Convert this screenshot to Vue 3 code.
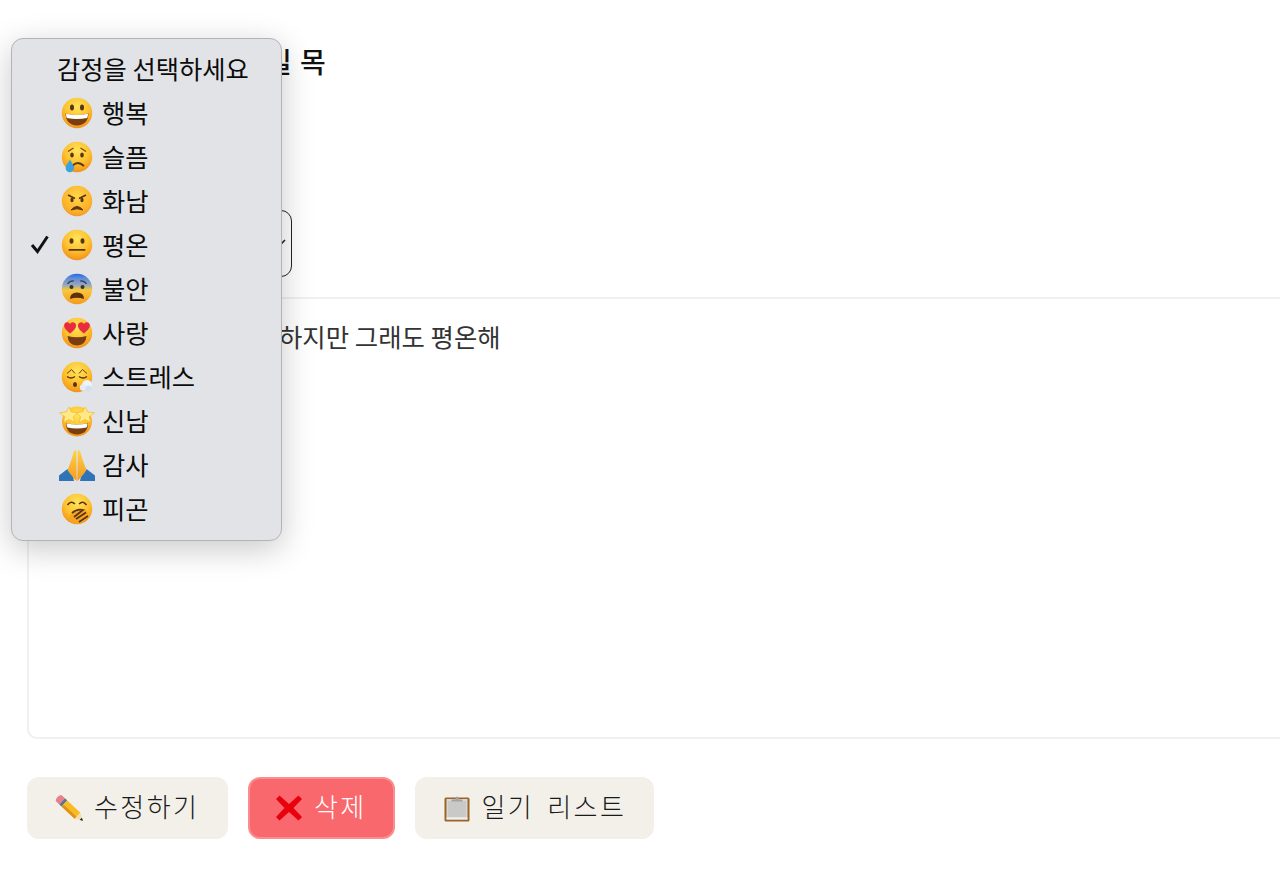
<script setup>
const rows = [
  { key: 'grin', label: '행복' },
  { key: 'cry', label: '슬픔' },
  { key: 'angry', label: '화남' },
  { key: 'neutral', label: '평온', checked: true },
  { key: 'fear', label: '불안' },
  { key: 'love', label: '사랑' },
  { key: 'exhale', label: '스트레스' },
  { key: 'star', label: '신남' },
  { key: 'pray', label: '감사' },
  { key: 'yawn', label: '피곤' }
]
</script>

<template>
  <div class="page">
    <svg class="defs" width="0" height="0" aria-hidden="true">
      <defs>
        <radialGradient id="face" cx="50%" cy="30%" r="72%">
          <stop offset="0" stop-color="#ffe45c" />
          <stop offset="0.55" stop-color="#fdc22f" />
          <stop offset="0.9" stop-color="#f59a1c" />
          <stop offset="1" stop-color="#ea8f2c" />
        </radialGradient>
        <radialGradient id="faceAngry" cx="50%" cy="35%" r="72%">
          <stop offset="0" stop-color="#ffd84a" />
          <stop offset="0.7" stop-color="#fbb028" />
          <stop offset="1" stop-color="#ec9028" />
        </radialGradient>
        <linearGradient id="faceFear" x1="0" y1="0" x2="0" y2="1">
          <stop offset="0" stop-color="#2468e4" />
          <stop offset="0.14" stop-color="#5f8ad8" />
          <stop offset="0.36" stop-color="#93a6bf" />
          <stop offset="0.54" stop-color="#f9c83a" />
          <stop offset="1" stop-color="#f59a1c" />
        </linearGradient>
        <linearGradient id="hand" x1="0" y1="0" x2="0" y2="1">
          <stop offset="0" stop-color="#ffd24a" />
          <stop offset="1" stop-color="#f29a1e" />
        </linearGradient>
      </defs>
    </svg>

    <h1 class="title">일 목</h1>

    <div class="select-box">
      <svg class="chevron" width="12" height="12" viewBox="0 0 12 12">
        <path d="M2 4l4 4 4-4" fill="none" stroke="#222" stroke-width="1.6" />
      </svg>
    </div>

    <div class="body-box">하지만 그래도 평온해</div>

    <div class="actions">
      <button class="btn btn-edit">
        <svg width="28" height="28" viewBox="0 0 28 28">
          <g transform="translate(3.5 4) rotate(43)">
            <path d="M0 -4.200h5v8.400h-5q-3 -4.200 0 -8.400z" fill="#e8808c" />
            <rect x="5" y="-4.200" width="3" height="8.400" fill="#5b7390" />
            <rect x="8" y="-4.200" width="18" height="8.400" fill="#f8bb22" />
            <rect x="8" y="1.400" width="18" height="2.800" fill="#e0911a" />
            <path d="M26 -4.200L33 0 26 4.200z" fill="#f5dcae" />
            <path d="M30.500 -1.500L33.500 0 30.500 1.500z" fill="#161616" />
          </g>
        </svg>
        <span class="btn-text">수정하기</span>
      </button>
      <button class="btn btn-delete">
        <svg width="28" height="28" viewBox="0 0 28 28">
          <path d="M1 5l3.500-3.500 9.500 8.500 9.500-8.500L27 5l-8.500 9L27 23l-3.500 3.500-9.500-8.500-9.500 8.500L1 23l8.500-9z" fill="#e9000f" />
        </svg>
        <span class="btn-text">삭제</span>
      </button>
      <button class="btn btn-list">
        <svg width="28" height="28" viewBox="0 0 28 28">
          <rect x="1.500" y="3.500" width="25" height="24" rx="1.500" fill="#9b6426" />
          <rect x="3.500" y="5" width="21" height="20.500" fill="#d8d8d6" />
          <rect x="5" y="7" width="18" height="16" fill="#c9c9c7" />
          <rect x="3.500" y="23.500" width="21" height="2" fill="#efefed" />
          <path d="M8.500 5.500h3.800c.3-1.600.9-3 1.700-3s1.400 1.400 1.700 3h3.800v2h-11z" fill="#a3a3a3" />
        </svg>
        <span class="btn-text">일기 리스트</span>
      </button>
    </div>

    <div class="menu">
      <div class="menu-row menu-head">감정을 선택하세요</div>
      <div v-for="row in rows" :key="row.key" class="menu-row">
        <span class="check">
          <svg v-if="row.checked" width="20" height="20" viewBox="0 0 20 20">
            <path d="M2 11l5.500 6.500L17.500 2.500" fill="none" stroke="#111" stroke-width="3" />
          </svg>
        </span>
        <span class="emoji">
          <svg width="36" height="32" viewBox="-2 0 36 32">
            <template v-if="row.key === 'grin'">
              <circle cx="16" cy="16" r="15.200" fill="url(#face)" />
              <ellipse cx="11" cy="10.500" rx="2" ry="3" fill="#5b3410" />
              <ellipse cx="21" cy="10.500" rx="2" ry="3" fill="#5b3410" />
              <path d="M4.500 16.500Q16 19.500 27.500 16.500Q27 28 16 28.500Q5 28 4.500 16.500z" fill="#7a3d12" />
              <path d="M5 16.700Q16 19.500 27 16.700Q27 19.500 26.200 21Q16 23 5.800 21Q5 19.500 5 16.700z" fill="#fff" />
            </template>
            <template v-else-if="row.key === 'cry'">
              <circle cx="16" cy="16" r="15.200" fill="url(#face)" />
              <path d="M7 10.500L12.500 7M25 10.500L19.500 7" stroke="#7a4510" stroke-width="1.300" fill="none" />
              <ellipse cx="11" cy="14" rx="1.800" ry="2.500" fill="#5b3410" />
              <ellipse cx="21" cy="14" rx="1.800" ry="2.500" fill="#5b3410" />
              <path d="M11 25.500Q16 19 23 25" stroke="#5b3410" stroke-width="2" fill="none" />
              <path d="M9 18.500C10.800 22 13 24 13 27a4.200 4.200 0 0 1-8.400 0C4.600 24 7 22 9 18.500z" fill="#3aa3dc" />
            </template>
            <template v-else-if="row.key === 'angry'">
              <circle cx="16" cy="16" r="15.200" fill="url(#faceAngry)" />
              <path d="M7 10L14 13.500M25 10L18 13.500" stroke="#5b3410" stroke-width="1.700" fill="none" />
              <ellipse cx="11" cy="15" rx="1.600" ry="2.200" fill="#5b3410" />
              <ellipse cx="21" cy="15" rx="1.600" ry="2.200" fill="#5b3410" />
              <path d="M10 25Q16 18 22 25Q16 22.500 10 25z" fill="#5b3410" stroke="#5b3410" stroke-width="1" />
            </template>
            <template v-else-if="row.key === 'neutral'">
              <circle cx="16" cy="16" r="15.200" fill="url(#face)" />
              <ellipse cx="10.500" cy="12" rx="2" ry="2.800" fill="#5b3410" />
              <ellipse cx="21.500" cy="12" rx="2" ry="2.800" fill="#5b3410" />
              <rect x="7.500" y="20" width="17" height="1.800" rx=".9" fill="#5b3410" />
            </template>
            <template v-else-if="row.key === 'fear'">
              <circle cx="16" cy="16" r="15.200" fill="url(#faceFear)" />
              <path d="M6.500 11Q9 7.500 13 8M25.500 11Q23 7.500 19 8" stroke="#33415c" stroke-width="1.200" fill="none" />
              <circle cx="10.500" cy="14" r="2" fill="#3a2f2a" />
              <circle cx="21.500" cy="14" r="2" fill="#3a2f2a" />
              <path d="M9 26Q9 19.500 16 19.500Q23 19.500 23 26Q16 23.500 9 26z" fill="#5b2f10" />
            </template>
            <template v-else-if="row.key === 'love'">
              <circle cx="16" cy="16" r="15.200" fill="url(#face)" />
              <path d="M9 16.500C5 13 2.500 10.500 3.300 7.500 4 5 7.500 4.300 9 7 10.500 4.300 14.500 5 15 8 15.500 11 12.500 14 9 16.500z" fill="#e82c3f" />
              <path d="M23 16.500C19.500 14 16.500 11 17 8 17.500 5 21.500 4.300 23 7 24.500 4.300 28 5 28.700 7.500 29.500 10.500 27 13 23 16.500z" fill="#e82c3f" />
              <path d="M6.500 19Q16 21.500 25.500 19Q25 28 16 28.500Q7 28 6.500 19z" fill="#7a3d12" />
            </template>
            <template v-else-if="row.key === 'exhale'">
              <circle cx="16" cy="16" r="15.200" fill="url(#face)" />
              <path d="M6 12.500L10.500 8.500L14 12.500M26 12.500L21.500 8.500L18 12.500" stroke="#6b3d10" stroke-width="1" fill="none" />
              <path d="M6 15.500Q10 18.500 14 15.500M18 15.500Q22 18.500 26 15.500" stroke="#5b3410" stroke-width="1.300" fill="none" />
              <ellipse cx="14" cy="23.500" rx="2" ry="2.500" fill="#5b3410" />
              <circle cx="26" cy="24" r="5" fill="#eef3f8" />
              <circle cx="22" cy="26.500" r="3.200" fill="#e4ecf5" />
              <circle cx="27.500" cy="27.500" r="3" fill="#cfe0f2" />
            </template>
            <template v-else-if="row.key === 'star'">
              <circle cx="16" cy="16.500" r="15" fill="url(#face)" />
              <path d="M8 2l2.500 5 6.500.7-4.500 4 1.300 5.800L8 14.500l-5.500 3 1.300-5.800L-1.500 7.700l6.700-.7z" fill="#ffe985" stroke="#f5b220" stroke-width=".6" />
              <path d="M24 2l2.800 5 6.700.7-5.300 4 1.300 5.800-5.500-3-5.800 3 1.300-5.800-4.500-4 6.500-.7z" fill="#ffe985" stroke="#f5b220" stroke-width=".6" />
              <path d="M5 18Q16 21 27 18Q27 29 16 29.500Q5 29 5 18z" fill="#7a3d12" />
              <path d="M5.500 18.200Q16 21 26.500 18.200Q26.500 21 25.500 22.500Q16 24.500 6.500 22.500Q5.500 21 5.500 18.200z" fill="#fff" />
            </template>
            <template v-else-if="row.key === 'pray'">
              <path d="M-2 32V26.500L6.500 20 12 27.500 13 32zM34 32V26.500L25.500 20 20 27.500 19 32z" fill="#2f73b8" />
              <path d="M15.700 32L13 29.500 9 24.500 6.500 21Q10.500 12 12.500 3.500Q13.500 .5 15.300 1.500zM16.300 32L19 29.500 23 24.500 25.500 21Q21.500 12 19.500 3.500Q18.500 .5 16.700 1.500z" fill="url(#hand)" />
            </template>
            <template v-else>
              <circle cx="16" cy="16" r="15.200" fill="url(#face)" />
              <path d="M6.500 12Q10 7 14 11M18 11Q22 7 25.500 12" stroke="#5b3410" stroke-width="1.600" fill="none" />
              <path d="M11 20Q16 15 22 16Q27 17 27 22Q25 30 17 31Q9 30 8 25Q8 22 11 20z" fill="#f6a523" />
              <path d="M11 20Q16 15.500 22 17L13 24M15 26L25 19.500M18 29L27 23" stroke="#5b3410" stroke-width="1.800" fill="none" />
            </template>
          </svg>
        </span>
        <span class="label">{{ row.label }}</span>
      </div>
    </div>
  </div>
</template>

<style scoped>
.page {
  position: relative;
  width: 1280px;
  height: 874px;
  overflow: hidden;
  background: #fff;
  box-sizing: border-box;
  padding: 41px 0 0 27px;
  font-family: "Noto Sans CJK KR", "Noto Sans", sans-serif;
  color: #111;
}
.defs {
  position: absolute;
}
.title {
  margin: 0 0 129px;
  padding-left: 239px;
  height: 40px;
  line-height: 40px;
  font-size: 28px;
  font-weight: 500;
  word-spacing: 2px;
}
.select-box {
  box-sizing: border-box;
  width: 265px;
  height: 67px;
  border: 1.5px solid #222;
  border-radius: 11px;
  display: flex;
  align-items: center;
  justify-content: flex-end;
  padding-right: 4px;
}
.chevron {
  display: block;
  margin-top: -3px;
}
.body-box {
  box-sizing: border-box;
  width: 1300px;
  height: 442px;
  margin-top: 20px;
  padding: 19px 0 0 250px;
  border: 2px solid #f0f0f0;
  border-radius: 10px;
  font-size: 25.4px;
  line-height: 36px;
  color: #333;
}
.actions {
  display: flex;
  gap: 20px;
  margin-top: 38px;
}
.btn {
  box-sizing: border-box;
  height: 62px;
  display: flex;
  align-items: center;
  gap: 11px;
  border: 0;
  border-radius: 12px;
  background: #f3f0ea;
  color: #1a1a1a;
  font-family: "Noto Sans CJK KR", sans-serif;
  font-size: 26px;
  font-weight: 300;
  letter-spacing: 2.4px;
  word-spacing: 5px;
}
.btn-text {
  margin-bottom: 5px;
}
.btn-edit {
  width: 201px;
  padding: 0 0 0 28px;
}
.btn-delete {
  width: 147px;
  padding: 0 0 0 25px;
  gap: 11px;
  background: #f9686c;
  border: 2px solid #fb8d90;
  color: #fff;
}
.btn-list {
  width: 239px;
  padding: 0 0 0 27.5px;
}
.menu {
  position: absolute;
  left: 10.5px;
  top: 38px;
  box-sizing: border-box;
  width: 271.5px;
  height: 503px;
  padding: 7.5px 0;
  background: #e1e3e7;
  border: 1px solid #b4b4b6;
  border-radius: 12px;
  box-shadow: 0 8px 32px rgba(0, 0, 0, 0.22);
}
.menu-row {
  display: flex;
  align-items: center;
  height: 43.95px;
  font-size: 25.3px;
  color: #0c0c0c;
}
.menu-head {
  padding-left: 45.5px;
}
.check {
  width: 45.5px;
  display: flex;
  padding-left: 18px;
  box-sizing: border-box;
}
.emoji {
  width: 39px;
  margin-right: 6px;
  margin-top: 2px;
  display: flex;
  justify-content: center;
}
.emoji svg {
  display: block;
}
</style>
